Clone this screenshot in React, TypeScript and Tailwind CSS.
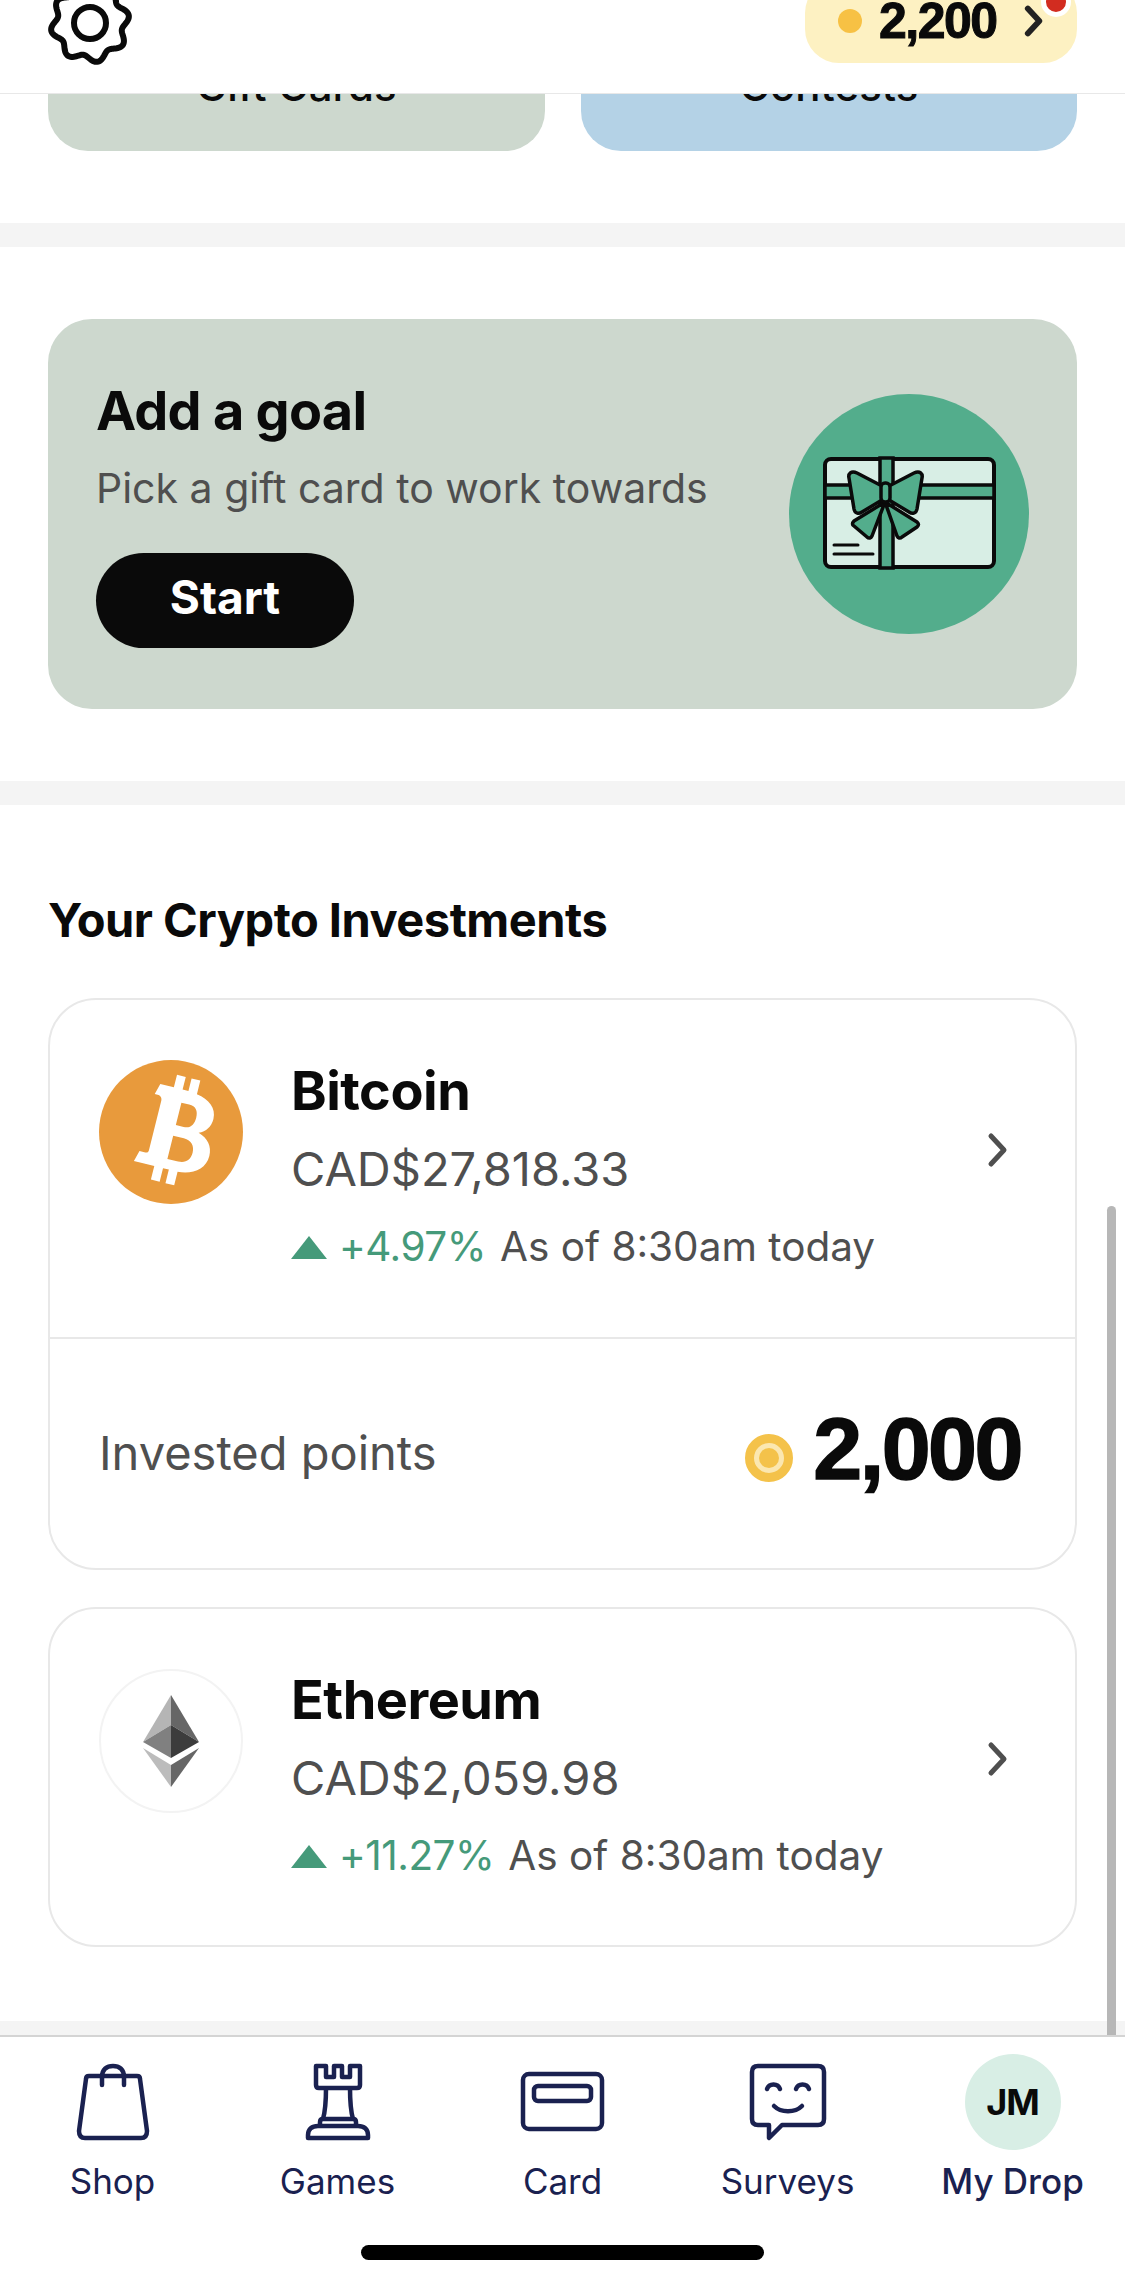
import React from 'react';

const gearPath = (() => {
  const points: string[] = [];
  for (let i = 0; i <= 240; i++) {
    const t = (i / 240) * Math.PI * 2;
    const r = 36 + 3.5 * Math.cos(8 * t + Math.PI / 2);
    points.push(`${(45 + r * Math.sin(t)).toFixed(2)},${(45 - r * Math.cos(t)).toFixed(2)}`);
  }
  return 'M' + points.join('L') + 'Z';
})();

function Chevron({ className, width = 5 }: { className: string; width?: number }) {
  return (
    <svg viewBox="0 0 22 36" fill="none" className={className}>
      <path d="M4 4l13 14L4 32" stroke="currentColor" strokeWidth={width} strokeLinecap="round" strokeLinejoin="round" />
    </svg>
  );
}

function Triangle() {
  return (
    <svg viewBox="0 0 36 23" className="w-[36px] h-[23px] shrink-0">
      <path d="M18 0L36 23H0Z" fill="#459a7a" />
    </svg>
  );
}

function GiftCard() {
  return (
    <svg viewBox="0 0 240 240" className="w-[240px] h-[240px] shrink-0">
      <circle cx="120" cy="120" r="120" fill="#53ad8c" />
      <rect x="36" y="65" width="169" height="108" rx="6" fill="#d8eee5" stroke="#0a0a0a" strokeWidth="4" />
      <path d="M36 91h169v13H36Z" fill="#53ad8c" stroke="#0a0a0a" strokeWidth="3.5" />
      <path d="M91 64h13v110H91Z" fill="#53ad8c" stroke="#0a0a0a" strokeWidth="3.5" />
      <path d="M96 108L65 127C63 129 63 131 65 132L78 143C80 145 82 144 83 142Z" fill="#53ad8c" stroke="#0a0a0a" strokeWidth="3.5" strokeLinejoin="round" />
      <path d="M96 108L128 128C130 130 130 131 128 133L113 143C111 145 109 144 108 142Z" fill="#53ad8c" stroke="#0a0a0a" strokeWidth="3.5" strokeLinejoin="round" />
      <path d="M93 92L68 79C62 76 59 80 60 84L65 115C66 120 70 120 73 118L93 106Z" fill="#53ad8c" stroke="#0a0a0a" strokeWidth="3.5" strokeLinejoin="round" />
      <path d="M100 92L125 79C131 76 134 80 133 84L128 115C127 120 123 120 120 118L100 106Z" fill="#53ad8c" stroke="#0a0a0a" strokeWidth="3.5" strokeLinejoin="round" />
      <rect x="92" y="89" width="9" height="19" rx="4" fill="#53ad8c" stroke="#0a0a0a" strokeWidth="3.5" />
      <path d="M45 151h24M45 160h39" stroke="#0a0a0a" strokeWidth="3" strokeLinecap="round" />
    </svg>
  );
}

function BitcoinLogo() {
  return (
    <svg viewBox="0 0 144 144" className="w-[144px] h-[144px] shrink-0">
      <circle cx="72" cy="72" r="72" fill="#e89a3c" />
      <g transform="translate(72 72) rotate(14) translate(-72 -72)">
        <path
          fillRule="evenodd"
          fill="#fff"
          d="M50 28h14V15h9v13h6V15h9v14c13 2 22 9 22 20 0 8-4 14-11 17 10 3 16 10 16 20 0 14-12 22-27 23v14h-9v-14h-6v14h-9v-14H43l3-11h6c2 0 3-1 3-3V44c0-3-2-5-5-5h-3Zm25 13v23h8c7 0 10-5 10-12s-3-11-10-11Zm0 34v24h11c8 0 12-5 12-12s-4-12-12-12Z"
        />
      </g>
    </svg>
  );
}

function EthereumLogo() {
  return (
    <div className="w-[144px] h-[144px] shrink-0 rounded-full border-2 border-[#f3f3f3] flex items-center justify-center">
      <svg viewBox="0 0 58 92" className="w-[58px] h-[92px]">
        <path d="M29 0L1 47l28-17Z" fill="#b5b5b5" />
        <path d="M29 0l28 47-28-17Z" fill="#666" />
        <path d="M1 47l28-17v33Z" fill="#808080" />
        <path d="M57 47L29 30v33Z" fill="#3c3c3c" />
        <path d="M1 53l28 17v22Z" fill="#bcbcbc" />
        <path d="M57 53L29 70v22Z" fill="#666" />
      </svg>
    </div>
  );
}

function CoinRow({ logo, name, price, change, since }: { logo: React.ReactNode; name: string; price: string; change: string; since: string }) {
  return (
    <div className="h-[337px] flex items-start pl-[49px] pr-[66px] pt-[60px]">
      {logo}
      <div className="ml-[48px] flex-1 -mt-[3px]">
        <div className="text-[54px] leading-[68px] font-bold tracking-[-0.5px] text-[#0a0a0a]">{name}</div>
        <div className="text-[47px] leading-[78px] mt-[5px] text-[#4f4f4f]">{price}</div>
        <div className="flex items-center text-[40.5px] leading-[78px] text-[#4f4f4f]">
          <Triangle />
          <span className="ml-[12px] tracking-[-0.5px] text-[#459a7a]">{change}</span>
          <span className="ml-[14px]">{since}</span>
        </div>
      </div>
      <Chevron className="w-[22px] h-[36px] mt-[72px] text-[#4f4f4f]" />
    </div>
  );
}

function NavItem({ label, active, children }: { label: string; active?: boolean; children: React.ReactNode }) {
  return (
    <div className="flex flex-col items-center">
      <div className="h-[97px] flex items-center justify-center">{children}</div>
      <div className={`mt-[8px] text-[35px] leading-[46px] text-[#1a2150] ${active ? 'font-medium' : ''}`}>{label}</div>
    </div>
  );
}

export default function App() {
  return (
    <div className="relative w-[1125px] h-[2284px] overflow-hidden bg-white flex flex-col font-['Inter',sans-serif]">
      {/* top bar, cut off by the top of the window */}
      <div className="relative z-10 h-[94px] shrink-0 bg-white border-b border-[#e8e8e8] flex items-start justify-between px-[48px]">
        <svg viewBox="0 0 90 90" fill="none" className="w-[90px] h-[90px] -mt-[22px] -ml-[3px]">
          <path d={gearPath} stroke="#0a0a0a" strokeWidth="6" />
          <circle cx="45" cy="45" r="16" stroke="#0a0a0a" strokeWidth="6" />
        </svg>
        <div className="relative w-[272px] h-[84px] -mt-[21px] rounded-[34px] bg-[#fdf1c2] flex items-center pl-[33px]">
          <span className="w-[24px] h-[24px] rounded-full bg-[#f7c144]" />
          <span className="ml-[17px] text-[50px] font-bold tracking-[-1.5px] text-[#0a0a0a] font-['Liberation_Sans',sans-serif] [-webkit-text-stroke:1px_#0a0a0a]">2,200</span>
          <Chevron width={6.5} className="ml-auto mr-[33px] w-[20px] h-[32px] text-[#222]" />
          <span className="absolute right-[6px] top-[8px] w-[30px] h-[30px] rounded-full bg-[#d22c20] border-[5px] border-white" />
        </div>
      </div>

      <div className="flex-1 min-h-0 overflow-hidden">
        <div className="-mt-[99px] h-[156px] px-[48px] grid grid-cols-2 gap-x-[36px]">
          <div className="rounded-b-[40px] bg-[#cdd8ce] flex items-end justify-center pb-[40px] text-[42px] leading-[50px] font-medium text-[#0a0a0a]">Gift Cards</div>
          <div className="rounded-b-[40px] bg-[#b4d2e6] flex items-end justify-center pb-[40px] text-[42px] leading-[50px] font-medium text-[#0a0a0a]">Contests</div>
        </div>

        <div className="mt-[72px] h-[24px] bg-[#f4f4f4]" />

        <div className="px-[48px] pt-[72px] pb-[72px]">
          <div className="h-[390px] rounded-[44px] bg-[#cdd8ce] flex items-center justify-between pl-[48px] pr-[48px]">
            <div className="-mt-[4px]">
              <div className="text-[54px] leading-[68px] font-bold tracking-[-0.75px] text-[#0a0a0a]">Add a goal</div>
              <div className="mt-[14px] text-[41px] leading-[58px] text-[#4f4f4f]">Pick a gift card to work towards</div>
              <div className="mt-[36px] w-[258px] h-[95px] pb-[5px] rounded-full bg-[#0a0a0a] flex items-center justify-center text-[46px] font-bold text-white">Start</div>
            </div>
            <GiftCard />
          </div>
        </div>

        <div className="h-[24px] bg-[#f4f4f4]" />

        <div className="px-[48px] pt-[87px]">
          <div className="text-[47px] leading-[56px] font-bold tracking-[-0.5px] text-[#0a0a0a]">Your Crypto Investments</div>

          <div className="mt-[50px] h-[572px] rounded-[48px] border-2 border-[#e8e8e8] flex flex-col">
            <CoinRow logo={<BitcoinLogo />} name="Bitcoin" price="CAD$27,818.33" change="+4.97%" since="As of 8:30am today" />
            <div className="flex-1 border-t-2 border-[#e8e8e8] flex items-center pl-[49px] pr-[54px]">
              <span className="text-[47px] text-[#4f4f4f]">Invested points</span>
              <span className="ml-auto w-[48px] h-[48px] mt-[8px] rounded-full border-[9px] border-[#f4c24a] bg-[#fbe7b0] flex items-center justify-center">
                <span className="w-[20px] h-[20px] rounded-full bg-[#f4c24a]" />
              </span>
              <span className="ml-[20px] text-[88px] leading-[100px] -mt-[10px] font-bold tracking-[-2.5px] text-[#0a0a0a] font-['Liberation_Sans',sans-serif] [-webkit-text-stroke:1.5px_#0a0a0a]">2,000</span>
            </div>
          </div>

          <div className="mt-[37px] h-[340px] rounded-[48px] border-2 border-[#e8e8e8]">
            <CoinRow logo={<EthereumLogo />} name="Ethereum" price="CAD$2,059.98" change="+11.27%" since="As of 8:30am today" />
          </div>
        </div>

        <div className="mt-[74px] h-[30px] bg-[#f4f4f4]" />
      </div>

      {/* tab bar */}
      <div className="relative z-10 h-[249px] shrink-0 bg-white border-t-2 border-[#d4d4d4] pt-[16px]">
        <div className="grid grid-cols-5">
          <NavItem label="Shop">
            <svg viewBox="0 0 74 78" fill="none" stroke="#1a2150" strokeWidth="4.5" strokeLinecap="round" strokeLinejoin="round" className="w-[74px] h-[78px]">
              <path d="M13 13h48c2 0 3 1 3 3l7 52c0 5-2 7-6 7H9c-4 0-6-2-6-7l7-52c0-2 1-3 3-3Z" />
              <path d="M26 22V14C26 6 31 3 37 3s11 3 11 11v8" />
            </svg>
          </NavItem>
          <NavItem label="Games">
            <svg viewBox="0 0 66 78" fill="none" stroke="#1a2150" strokeWidth="4.5" strokeLinejoin="round" className="w-[66px] h-[78px]">
              <path d="M11 3h10v11h8V3h8v11h8V3h10v19c0 2-1 3-3 3H14c-2 0-3-1-3-3Z" />
              <path d="M21 25c0 15-1 24-3 31M45 25c0 15 1 24 3 31" />
              <path d="M15 63v-4c0-2 1-3 3-3h30c2 0 3 1 3 3v4" />
              <path d="M3 75v-3c0-6 4-9 10-9h40c6 0 10 3 10 9v3Z" />
            </svg>
          </NavItem>
          <NavItem label="Card">
            <svg viewBox="0 0 85 61" fill="none" stroke="#1a2150" strokeWidth="4.5" strokeLinejoin="round" className="w-[85px] h-[61px]">
              <rect x="3" y="3" width="79" height="55" rx="6" />
              <rect x="14" y="15" width="57" height="15" rx="4" />
            </svg>
          </NavItem>
          <NavItem label="Surveys">
            <svg viewBox="0 0 78 78" fill="none" stroke="#1a2150" strokeWidth="4.5" strokeLinecap="round" strokeLinejoin="round" className="w-[78px] h-[78px]">
              <path d="M9 3h60c4 0 6 2 6 6v47c0 4-2 6-6 6H33L20 75V62H9c-4 0-6-2-6-6V9c0-4 2-6 6-6Z" />
              <path d="M18 26c2-6 11-6 13 0M47 26c2-6 11-6 13 0M25 43c7 7 21 7 28 0" />
            </svg>
          </NavItem>
          <NavItem label="My Drop" active>
            <div className="w-[96px] h-[96px] rounded-full bg-[#d8eee5] flex items-center justify-center text-[36px] font-bold tracking-[-1px] text-[#0a0a0a]">JM</div>
          </NavItem>
        </div>
        <div className="absolute left-[361px] bottom-[24px] w-[403px] h-[15px] rounded-full bg-black" />
      </div>

      {/* scrollbar thumb */}
      <div className="absolute z-0 left-[1107px] top-[1206px] w-[9px] h-[830px] rounded-t-full bg-[#b7b7b7]" />
    </div>
  );
}
